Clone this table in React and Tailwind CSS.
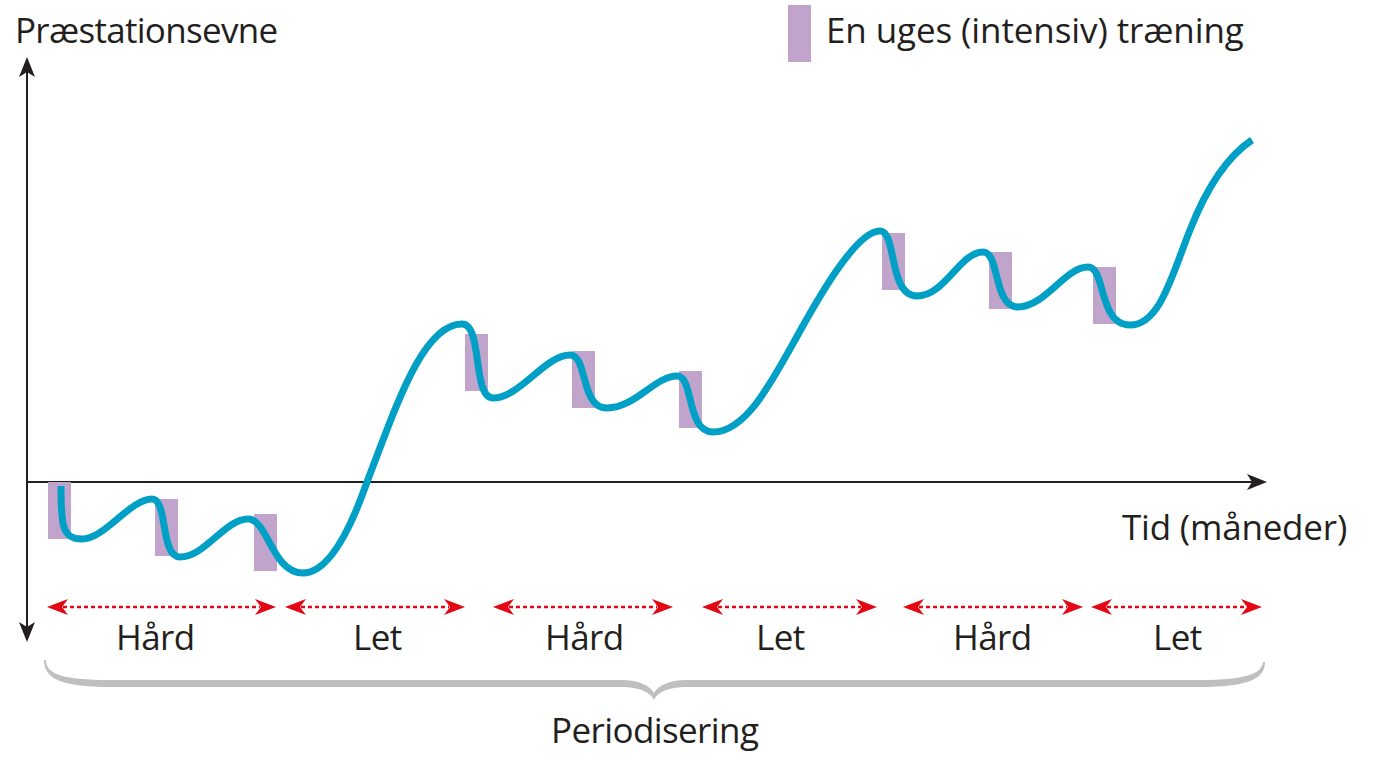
const purpleBlocks = [
  [48, 482], [155, 499], [254, 514],
  [465, 334], [572, 351], [679, 371],
  [882, 233], [989, 252], [1093, 267],
];

const phases = [
  { from: 47, to: 276, label: 'Hård', left: 116 },
  { from: 285, to: 465, label: 'Let', left: 353 },
  { from: 493, to: 673, label: 'Hård', left: 545 },
  { from: 702, to: 877, label: 'Let', left: 756 },
  { from: 903, to: 1083, label: 'Hård', left: 953 },
  { from: 1091, to: 1262, label: 'Let', left: 1153 },
];

const curve = [
  'M 61 486',
  'C 61 525, 62 539, 82 539',
  'C 105 539, 130 499, 152 499',
  'C 168 499, 160 557, 180 557',
  'C 205 557, 225 519, 248 519',
  'C 268 519, 272 573, 303 573',
  'C 330 573, 352 525, 367 482',
  'C 395 410, 422 324, 462 324',
  'C 483 324, 472 398, 493 398',
  'C 520 398, 545 355, 570 355',
  'C 588 355, 580 408, 607 408',
  'C 635 408, 655 376, 677 376',
  'C 694 376, 686 432, 713 432',
  'C 745 432, 770 385, 795 340',
  'C 815 304, 855 231, 880 231',
  'C 897 231, 888 296, 917 296',
  'C 945 296, 960 252, 983 252',
  'C 1000 252, 993 307, 1018 307',
  'C 1045 307, 1065 267, 1088 267',
  'C 1106 267, 1098 325, 1130 325',
  'C 1160 325, 1172 275, 1190 230',
  'C 1203 197, 1222 160, 1252 140',
].join(' ');

const brace = [
  'M 44 660',
  'C 44 678, 60 687, 110 687',
  'L 620 687',
  'C 640 687, 650 692, 654 700',
  'C 658 692, 668 687, 688 687',
  'L 1200 687',
  'C 1250 687, 1265 678, 1265 662',
  'L 1263 662',
  'C 1262 674, 1245 680, 1200 680',
  'L 688 680',
  'C 668 680, 658 686, 654 693',
  'C 650 686, 640 680, 620 680',
  'L 110 680',
  'C 62 680, 46 674, 46 660',
  'Z',
].join(' ');

function PhaseArrow({ from, to }) {
  const y = 607;
  return (
    <g fill="#e30613">
      <polygon points={`${from},${y} ${from + 21},${y - 8} ${from + 15},${y} ${from + 21},${y + 8}`} />
      <polygon points={`${to},${y} ${to - 21},${y - 8} ${to - 15},${y} ${to - 21},${y + 8}`} />
      <line x1={from + 16} y1={y} x2={to - 16} y2={y} stroke="#e30613" strokeWidth="2.5" strokeDasharray="4 3" />
    </g>
  );
}

const label = 'absolute leading-none whitespace-nowrap text-[#231f20] text-[35px] font-["Open_Sans",sans-serif]';

export default function App() {
  return (
    <main className="relative h-[761px] w-[1391px] overflow-hidden bg-white">
      <svg className="absolute inset-0" width="1391" height="761" viewBox="0 0 1391 761">
        {/* axes */}
        <g stroke="#231f20" strokeWidth="2" fill="none">
          <line x1="27" y1="70" x2="27" y2="630" />
          <line x1="27" y1="482" x2="1255" y2="482" />
        </g>
        <g fill="#231f20">
          <polygon points="27,57 35,77 27,72 19,77" />
          <polygon points="27,642 35,622 27,627 19,622" />
          <polygon points="1267,482 1247,474 1252,482 1247,490" />
        </g>

        {/* weeks of intensive training */}
        <g fill="#c0a4cb">
          <rect x="788" y="5" width="23" height="57" />
          {purpleBlocks.map(([x, y]) => (
            <rect key={`${x}-${y}`} x={x} y={y} width="23" height="57" />
          ))}
        </g>

        <path d={curve} fill="none" stroke="#00a0c6" strokeWidth="7" strokeLinecap="butt" strokeLinejoin="round" />

        {phases.map((phase) => (
          <PhaseArrow key={phase.from} from={phase.from} to={phase.to} />
        ))}

        <path d={brace} fill="#bfbfbf" />
      </svg>

      <div className={`${label} left-[15px] top-[12px] tracking-[-0.7px]`}>Præstationsevne</div>
      <div className={`${label} left-[826px] top-[12px] tracking-[-0.1px]`}>En uges (intensiv) træning</div>
      <div className={`${label} left-[1122px] top-[509px] tracking-[-0.2px]`}>Tid (måneder)</div>

      {phases.map((phase) => (
        <div
          key={phase.from}
          className={`${label} top-[619px] tracking-[-0.6px]`}
          style={{ left: phase.left }}
        >
          {phase.label}
        </div>
      ))}

      <div className={`${label} left-[551px] top-[712px] tracking-[-0.6px]`}>Periodisering</div>
    </main>
  );
}
